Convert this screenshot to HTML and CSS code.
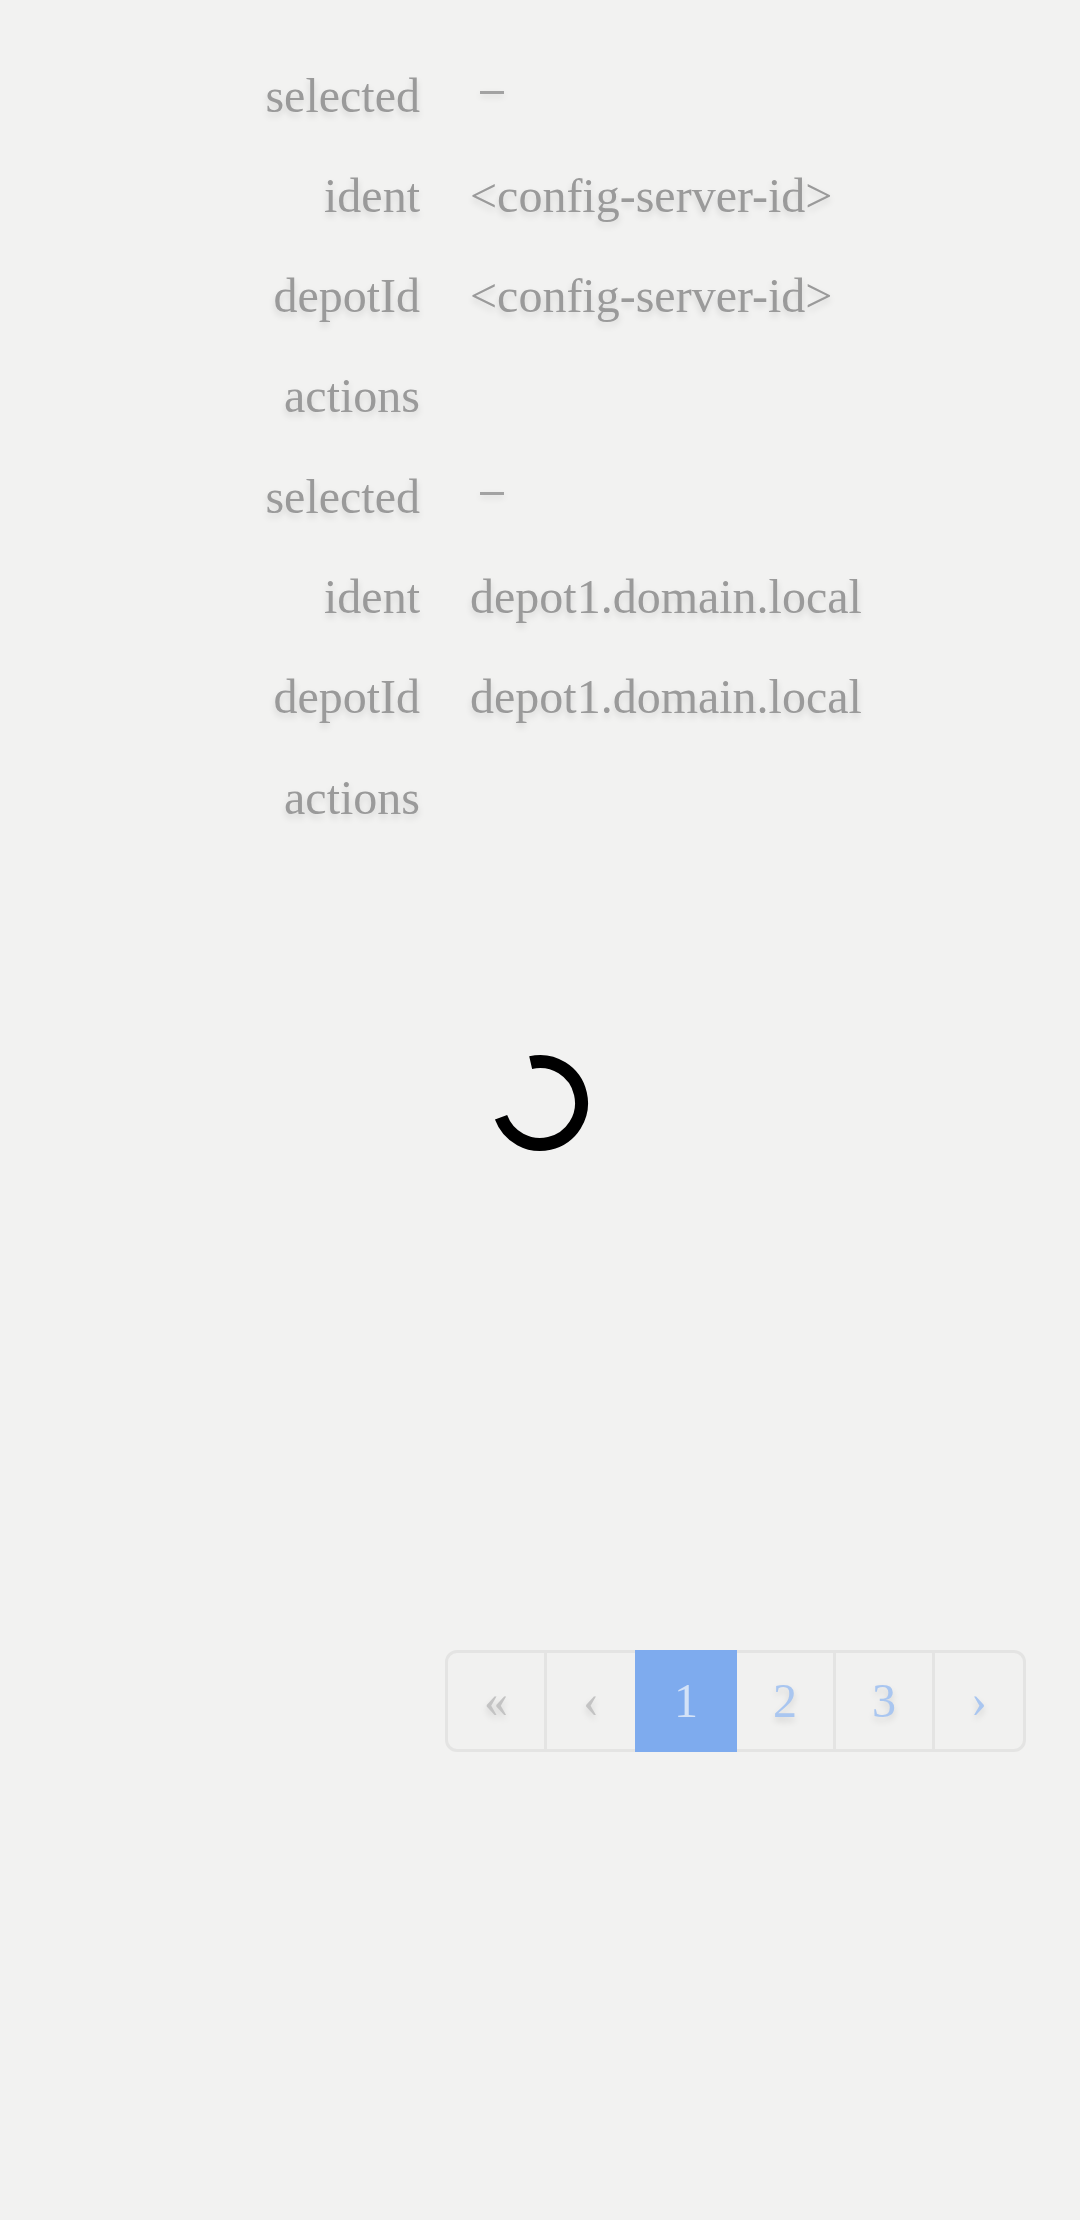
FILE: index.html
```html
<!DOCTYPE html>
<html lang="en">
<head>
<meta charset="utf-8">
<title>Depots</title>
<link rel="stylesheet" href="styles.css">
</head>
<body>
<main class="content">
  <div class="table">
    <div class="record">
      <div class="row"><span class="label">selected</span><span class="value"><span class="dash"></span></span></div>
      <div class="row"><span class="label">ident</span><span class="value">&lt;config-server-id&gt;</span></div>
      <div class="row"><span class="label">depotId</span><span class="value">&lt;config-server-id&gt;</span></div>
      <div class="row"><span class="label">actions</span><span class="value"></span></div>
    </div>
    <div class="record">
      <div class="row"><span class="label">selected</span><span class="value"><span class="dash"></span></span></div>
      <div class="row"><span class="label">ident</span><span class="value">depot1.domain.local</span></div>
      <div class="row"><span class="label">depotId</span><span class="value">depot1.domain.local</span></div>
      <div class="row"><span class="label">actions</span><span class="value"></span></div>
    </div>
  </div>
  <nav class="pager">
    <ul class="pagination">
      <li class="page disabled"><span class="link">«</span></li>
      <li class="page disabled"><span class="link">‹</span></li>
      <li class="page active"><span class="link">1</span></li>
      <li class="page"><span class="link">2</span></li>
      <li class="page"><span class="link">3</span></li>
      <li class="page"><span class="link">›</span></li>
    </ul>
  </nav>
</main>
<div class="overlay">
  <svg class="spinner" width="100" height="100" viewBox="0 0 100 100" aria-label="loading">
    <circle cx="50" cy="50" r="41.5" fill="none" stroke="#000" stroke-width="13" stroke-dasharray="190 400" transform="rotate(-103 50 50)"/>
  </svg>
</div>
</body>
</html>
```
FILE: styles.css
```css
html, body {
  margin: 0;
  padding: 0;
  background: #f2f2f1;
}

body {
  font-family: "Liberation Serif", "Times New Roman", serif;
  font-size: 48px;
  color: #9a9a9a;
}

.content {
  padding-top: 45.5px;
  filter: blur(0.7px);
  text-shadow: 0 4px 7px rgba(0, 0, 0, 0.13);
}

.row {
  display: grid;
  grid-template-columns: 420px 1fr;
  column-gap: 50px;
  height: 100.3px;
  line-height: 100.3px;
  white-space: nowrap;
}

.label {
  text-align: right;
}

.dash {
  display: inline-block;
  width: 24px;
  height: 3px;
  margin-left: 10px;
  background: #a2a2a2;
  vertical-align: 18px;
  box-shadow: 0 3px 6px rgba(0, 0, 0, 0.1);
}

.pager {
  display: flex;
  justify-content: flex-end;
  padding-right: 54px;
  margin-top: 802px;
}

.pagination {
  display: flex;
  list-style: none;
  margin: 0;
  padding: 0;
}

.page + .page {
  margin-left: -3px;
}

.link {
  display: block;
  padding: 18px 36px;
  line-height: 60px;
  border: 3px solid #e4e4e3;
  background: #f1f1f0;
  color: #a9c6f0;
}

.page:first-child .link {
  border-radius: 12px 0 0 12px;
}

.page:last-child .link {
  border-radius: 0 12px 12px 0;
}

.disabled .link {
  color: #c3c3c3;
}

.active .link {
  position: relative;
  background: #7eabee;
  border-color: #7eabee;
  color: #d3e2f7;
  text-shadow: none;
}

.overlay {
  position: fixed;
  inset: 0;
  display: flex;
  align-items: center;
  justify-content: center;
  padding-bottom: 14px;
  pointer-events: none;
}

.spinner {
  display: block;
}
```
